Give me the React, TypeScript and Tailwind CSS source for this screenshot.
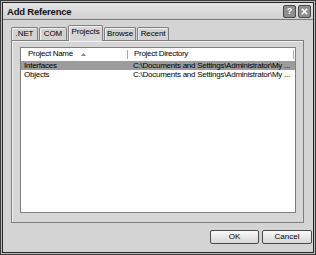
import React from "react";

const font = { fontFamily: '"Liberation Sans", Arial, sans-serif' };

function Tab({ label, active, w }: { label: string; active?: boolean; w: string }) {
  return active ? (
    <div
      className={`${w} h-[16px] -mb-px relative z-10 bg-[#d6d6d6] border border-b-0 border-[#7e7e7e] rounded-t-[2px] flex items-start justify-center pt-[2px] text-[8px] leading-none tracking-[-0.1px] text-black shadow-[inset_1px_1px_0_#f4f4f4]`}
    >
      {label}
    </div>
  ) : (
    <div
      className={`${w} h-[13px] bg-[#d2d2d2] border border-b-0 border-[#7e7e7e] rounded-t-[2px] flex items-start justify-center pt-[2px] text-[8px] leading-none tracking-[-0.1px] text-black shadow-[inset_1px_1px_0_#f0f0f0]`}
    >
      {label}
    </div>
  );
}

export default function App() {
  return (
    <div style={font} className="w-[316px] h-[255px] border border-[#3a3a3a] bg-[#b8b8b8]">
      <div className="w-full h-full border border-[#bdbdbd]">
        <div className="w-full h-full border border-[#262626] bg-[#d4d4d4] flex flex-col">
          {/* title bar */}
          <div className="h-[17px] flex items-center justify-between bg-gradient-to-b from-[#e4e4e4] to-[#d0d0d0] border-b border-[#7a7a7a] pl-[4px] pr-[2px]">
            <span className="text-[9.5px] font-bold text-[#111] leading-none tracking-[-0.2px] mt-[1px]">Add Reference</span>
            <div className="flex gap-[2px]">
              <div className="w-[13px] h-[13px] bg-[#8e8e8e] border border-[#4a4a4a] rounded-[2px] flex items-center justify-center text-[9px] font-bold text-white leading-none">?</div>
              <div className="w-[13px] h-[13px] bg-[#8e8e8e] border border-[#4a4a4a] rounded-[2px] flex items-center justify-center">
                <svg width="7" height="7" viewBox="0 0 7 7">
                  <path d="M0.8 0.8L6.2 6.2M6.2 0.8L0.8 6.2" stroke="white" strokeWidth="1.6" />
                </svg>
              </div>
            </div>
          </div>
          {/* body */}
          <div className="flex-1 flex flex-col pl-[8px] pt-[5px]">
            <div className="flex items-end pl-[0px] gap-[1px] h-[15px]">
              <Tab label=".NET" w="w-[27px]" />
              <Tab label="COM" w="w-[28px]" />
              <Tab label="Projects" active w="w-[35px]" />
              <Tab label="Browse" w="w-[32px]" />
              <Tab label="Recent" w="w-[32px]" />
            </div>
            <div className="w-[293px] h-[183px] border border-[#7e7e7e] bg-[#d6d6d6] pl-[8px] pt-[6px] shadow-[inset_1px_1px_0_#f2f2f2]">
              <div className="w-[276px] h-[166px] bg-white border border-[#7e7e7e] flex flex-col">
                <div className="h-[12px] flex items-center text-[8px] leading-none tracking-[-0.3px] text-black">
                  <div className="w-[107px] flex items-center pl-[7px] border-r border-[#a8a8a8] h-[9px]">
                    <span>Project Name</span>
                    <svg className="ml-[8px]" width="5" height="3" viewBox="0 0 5 3">
                      <path d="M2.5 0L5 3H0Z" fill="#8a8a8a" />
                    </svg>
                  </div>
                  <div className="pl-[6px] flex-1 border-r border-[#a8a8a8] h-[9px] flex items-center mr-[1px]">Project Directory</div>
                </div>
                <div className="mt-[1px] h-[9px] bg-[#9c9c9c] flex items-center text-[8px] text-black leading-none tracking-[-0.25px]">
                  <div className="w-[110px] pl-[3px] shrink-0">Interfaces</div>
                  <div className="pl-[2px] whitespace-nowrap">C:\Documents and Settings\Administrator\My ...</div>
                </div>
                <div className="h-[9px] flex items-center text-[8px] text-black leading-none tracking-[-0.25px]">
                  <div className="w-[110px] pl-[3px] shrink-0">Objects</div>
                  <div className="pl-[2px] whitespace-nowrap">C:\Documents and Settings\Administrator\My ...</div>
                </div>
              </div>
            </div>
            <div className="w-[301px] flex justify-end gap-[3px] mt-[7px]">
              <button className="w-[49px] h-[14px] border border-[#4a4a4a] rounded-[2px] bg-gradient-to-b from-[#fbfbfb] to-[#d6d6d6] text-[8px] text-black leading-none">OK</button>
              <button className="w-[50px] h-[14px] border border-[#4a4a4a] rounded-[2px] bg-gradient-to-b from-[#fbfbfb] to-[#d6d6d6] text-[8px] text-black leading-none">Cancel</button>
            </div>
          </div>
        </div>
      </div>
    </div>
  );
}
